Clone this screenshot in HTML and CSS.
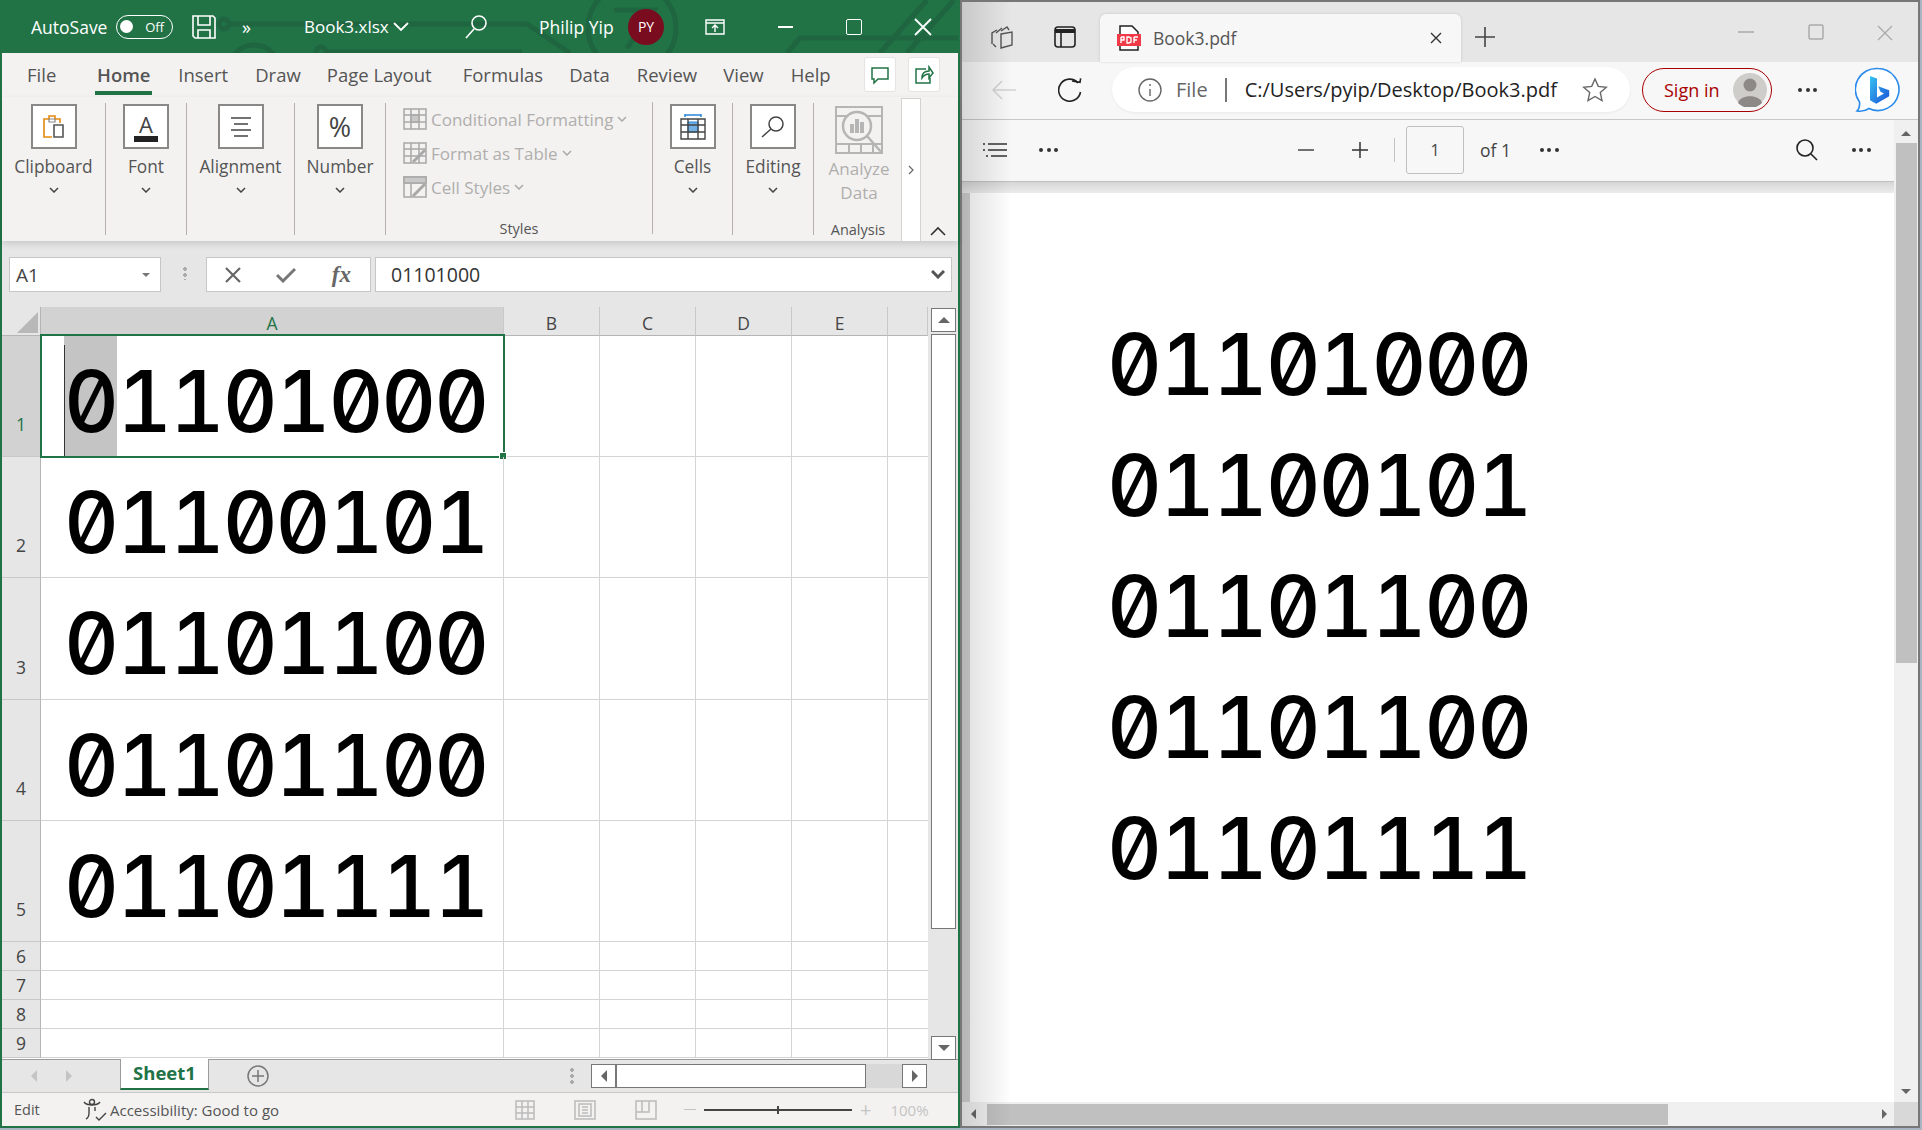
FILE: index.html
```html
<!DOCTYPE html>
<html lang="en">
<head>
    <meta charset="UTF-8">
    <title>Book3</title>
    <link rel="stylesheet" href="styles.css">
</head>
<body>
    <div class="excel">
        <div class="titlebar">
            <svg class="title-art" width="956" height="53" viewBox="0 0 956 53" fill="none" stroke="#1e6540" stroke-width="5">
                <circle cx="222" cy="24" r="5"/>
                <path d="M227 24H525L568 53"/>
                <circle cx="252" cy="70" r="25"/>
                <circle cx="319" cy="52" r="5"/>
                <path d="M324 52H520"/>
                <circle cx="630" cy="28" r="44"/>
                <path d="M612 10h40L625 48M785 53l13-15h160M878 53L925 0M905 53L952 0"/>
            </svg>
            <span class="autosave">AutoSave</span>
            <span class="toggle"><i></i>Off</span>
            <svg class="ic-save" width="26" height="26" viewBox="0 0 26 26" fill="none" stroke="#fff" stroke-width="1.6"><path d="M2 2h20l2 2v20H4l-2-2zM7 2v9h12V2M7 24v-8h12v8"/></svg>
            <span class="more">»</span>
            <span class="filename">Book3.xlsx</span>
            <svg class="ic-down" width="16" height="10" viewBox="0 0 16 10" fill="none" stroke="#fff" stroke-width="1.8"><path d="M1 1l7 7 7-7"/></svg>
            <svg class="ic-search" width="24" height="26" viewBox="0 0 24 26" fill="none" stroke="#fff" stroke-width="1.6"><circle cx="15" cy="9" r="7"/><path d="M10 15L2 24"/></svg>
            <span class="username">Philip Yip</span>
            <span class="avatar">PY</span>
            <svg class="ic-display" width="20" height="16" viewBox="0 0 20 16" fill="none" stroke="#fff" stroke-width="1.4"><path d="M1 1h18v14H1zM1 4h18M10 13V6M7 9l3-3 3 3"/></svg>
            <span class="win-btn min"></span>
            <span class="win-btn max"></span>
            <svg class="ic-close" width="18" height="18" viewBox="0 0 18 18" stroke="#fff" stroke-width="1.8"><path d="M1 1l16 16M17 1L1 17"/></svg>
        </div>

        <div class="tabs">
            <span class="tab file">File</span>
            <span class="tab home">Home</span>
            <span class="tab insert">Insert</span>
            <span class="tab draw">Draw</span>
            <span class="tab layout">Page Layout</span>
            <span class="tab formulas">Formulas</span>
            <span class="tab data">Data</span>
            <span class="tab review">Review</span>
            <span class="tab view">View</span>
            <span class="tab help">Help</span>
            <span class="tab-btn">
                <svg width="20" height="20" viewBox="0 0 20 20" fill="none" stroke="#217346" stroke-width="1.5"><path d="M2 3h16v11H8l-4 4v-4H2z"/></svg>
            </span>
            <span class="tab-btn share">
                <svg width="20" height="20" viewBox="0 0 20 20" fill="none" stroke="#217346" stroke-width="1.5"><path d="M12 4H2v14h14v-5M8 13c0-5 3-7 7-7V2l4 6-4 5V9c-3 0-5 1-7 4z"/></svg>
            </span>
        </div>

        <div class="ribbon">
            <div class="group g-clip">
                <span class="icon-box">
                    <svg width="24" height="26" viewBox="0 0 24 26" fill="none"><path d="M10 23H2V5h5V2h6v3h5v4" stroke="#e8890c" stroke-width="1.6"/><path d="M12 11h9v12h-9z" stroke="#555" stroke-width="1.6" fill="#fff"/><path d="M7 5h6v3H7z" stroke="#888" stroke-width="1.2"/></svg>
                </span>
                <span class="group-name">Clipboard</span>
                <svg class="chev" width="10" height="6" viewBox="0 0 10 6" fill="none" stroke="#444" stroke-width="1.5"><path d="M1 1l4 4 4-4"/></svg>
            </div>
            <div class="group g-font">
                <span class="icon-box">
                    <span class="font-a">A</span>
                </span>
                <span class="group-name">Font</span>
                <svg class="chev" width="10" height="6" viewBox="0 0 10 6" fill="none" stroke="#444" stroke-width="1.5"><path d="M1 1l4 4 4-4"/></svg>
            </div>
            <div class="group g-align">
                <span class="icon-box">
                    <svg width="24" height="22" viewBox="0 0 24 22" stroke="#444" stroke-width="1.5"><path d="M2 2h20M5 8h14M2 14h20M5 20h14"/></svg>
                </span>
                <span class="group-name">Alignment</span>
                <svg class="chev" width="10" height="6" viewBox="0 0 10 6" fill="none" stroke="#444" stroke-width="1.5"><path d="M1 1l4 4 4-4"/></svg>
            </div>
            <div class="group g-num">
                <span class="icon-box"><span class="percent">%</span></span>
                <span class="group-name">Number</span>
                <svg class="chev" width="10" height="6" viewBox="0 0 10 6" fill="none" stroke="#444" stroke-width="1.5"><path d="M1 1l4 4 4-4"/></svg>
            </div>
            <div class="group g-styles">
                <div class="style-row">
                    <svg width="24" height="22" viewBox="0 0 24 22" fill="none" stroke="#a8a8a8" stroke-width="1.5"><path d="M1 1h22v20H1zM1 7h22M1 14h22M8 1v20M16 1v20"/><path d="M8 7h8v7H8z" fill="#c8c8c8"/></svg>
                    <span>Conditional Formatting</span>
                    <svg width="10" height="6" viewBox="0 0 10 6" fill="none" stroke="#aaa" stroke-width="1.5"><path d="M1 1l4 4 4-4"/></svg>
                </div>
                <div class="style-row">
                    <svg width="24" height="22" viewBox="0 0 24 22" fill="none" stroke="#a8a8a8" stroke-width="1.5"><path d="M1 1h22v20H1zM1 7h22M8 1v20M16 1v20M1 14h22"/><path d="M10 20l12-12" stroke-width="3"/></svg>
                    <span>Format as Table</span>
                    <svg width="10" height="6" viewBox="0 0 10 6" fill="none" stroke="#aaa" stroke-width="1.5"><path d="M1 1l4 4 4-4"/></svg>
                </div>
                <div class="style-row">
                    <svg width="24" height="22" viewBox="0 0 24 22" fill="none" stroke="#a8a8a8" stroke-width="1.5"><path d="M1 1h22v20H1zM1 7h22M8 7v14"/><path d="M1 1h22v6H1z" fill="#c8c8c8"/><path d="M10 20l12-12" stroke-width="3"/></svg>
                    <span>Cell Styles</span>
                    <svg width="10" height="6" viewBox="0 0 10 6" fill="none" stroke="#aaa" stroke-width="1.5"><path d="M1 1l4 4 4-4"/></svg>
                </div>
                <span class="group-label">Styles</span>
            </div>
            <div class="group g-cells">
                <span class="icon-box">
                    <svg width="26" height="26" viewBox="0 0 26 26" fill="none"><path d="M5 1h16M5 0v3M21 0v3" stroke="#2b88d8" stroke-width="1.5"/><path d="M8 8h10v10H8z" fill="#71afe5" stroke="#2b88d8"/><path d="M1 5h24v20H1zM1 11h24M1 18h24M8 5v20M18 5v20" stroke="#444" stroke-width="1.4"/></svg>
                </span>
                <span class="group-name">Cells</span>
                <svg class="chev" width="10" height="6" viewBox="0 0 10 6" fill="none" stroke="#444" stroke-width="1.5"><path d="M1 1l4 4 4-4"/></svg>
            </div>
            <div class="group g-edit">
                <span class="icon-box">
                    <svg width="26" height="26" viewBox="0 0 26 26" fill="none" stroke="#444" stroke-width="1.5"><circle cx="16" cy="10" r="7"/><path d="M11 15L2 23"/></svg>
                </span>
                <span class="group-name">Editing</span>
                <svg class="chev" width="10" height="6" viewBox="0 0 10 6" fill="none" stroke="#444" stroke-width="1.5"><path d="M1 1l4 4 4-4"/></svg>
            </div>
            <div class="group g-analyze">
                <svg class="analyze-ic" width="48" height="48" viewBox="0 0 48 48" fill="none" stroke="#b5b5b5" stroke-width="2"><path d="M1 1h46v46H1zM1 10h46M1 38h46M14 38v9M26 38v9M38 38v9"/><circle cx="22" cy="20" r="14" fill="#f3f2f1" stroke-width="2.5"/><path d="M32 30l15 17" stroke-width="2.5"/><path d="M15 18h4v9h-4zM20 13h4v14h-4zM25 16h4v11h-4z" fill="#b5b5b5" stroke="none"/></svg>
                <span class="analyze-name">Analyze<br>Data</span>
                <span class="group-label">Analysis</span>
            </div>
            <div class="ribbon-strip"><svg width="6" height="10" viewBox="0 0 6 10" fill="none" stroke="#666" stroke-width="1.2"><path d="M1 1l4 4-4 4"/></svg></div>
            <svg class="collapse" width="16" height="10" viewBox="0 0 16 10" fill="none" stroke="#333" stroke-width="1.6"><path d="M1 9l7-7 7 7"/></svg>
        </div>

        <div class="formula-area">
            <div class="namebox">A1<i class="caret"></i></div>
            <span class="grip"></span>
            <div class="fx-btns">
                <svg width="16" height="16" viewBox="0 0 16 16" stroke="#666" stroke-width="2.2"><path d="M1 1l14 14M15 1L1 15"/></svg>
                <svg width="20" height="16" viewBox="0 0 20 16" fill="none" stroke="#777" stroke-width="3"><path d="M1 8l6 6L19 2"/></svg>
                <span class="fx">fx</span>
            </div>
            <div class="formula-input">01101000
                <svg width="14" height="9" viewBox="0 0 14 9" fill="none" stroke="#555" stroke-width="3"><path d="M1 1l6 6 6-6"/></svg>
            </div>
        </div>

        <div class="sheet-area">
            <div class="grid">
                <div class="corner"><i></i></div>
                <div class="col-head active">A</div>
                <div class="col-head">B</div>
                <div class="col-head">C</div>
                <div class="col-head">D</div>
                <div class="col-head">E</div>
                <div class="col-head last"></div>

                <div class="row-head tall active">1</div>
                <div class="cell big"><span class="sel">0</span>1101000<i class="cursor"></i><i class="sel-box"></i></div>
                <div class="cell"></div><div class="cell"></div><div class="cell"></div><div class="cell"></div><div class="cell last"></div>

                <div class="row-head tall">2</div>
                <div class="cell big">01100101</div>
                <div class="cell"></div><div class="cell"></div><div class="cell"></div><div class="cell"></div><div class="cell last"></div>

                <div class="row-head tall">3</div>
                <div class="cell big">01101100</div>
                <div class="cell"></div><div class="cell"></div><div class="cell"></div><div class="cell"></div><div class="cell last"></div>

                <div class="row-head tall">4</div>
                <div class="cell big">01101100</div>
                <div class="cell"></div><div class="cell"></div><div class="cell"></div><div class="cell"></div><div class="cell last"></div>

                <div class="row-head tall">5</div>
                <div class="cell big">01101111</div>
                <div class="cell"></div><div class="cell"></div><div class="cell"></div><div class="cell"></div><div class="cell last"></div>

                <div class="row-head">6</div>
                <div class="cell"></div><div class="cell"></div><div class="cell"></div><div class="cell"></div><div class="cell"></div><div class="cell last"></div>
                <div class="row-head">7</div>
                <div class="cell"></div><div class="cell"></div><div class="cell"></div><div class="cell"></div><div class="cell"></div><div class="cell last"></div>
                <div class="row-head">8</div>
                <div class="cell"></div><div class="cell"></div><div class="cell"></div><div class="cell"></div><div class="cell"></div><div class="cell last"></div>
                <div class="row-head">9</div>
                <div class="cell"></div><div class="cell"></div><div class="cell"></div><div class="cell"></div><div class="cell"></div><div class="cell last"></div>
            </div>
            <div class="vscroll">
                <span class="sb-btn"><i class="tri up"></i></span>
                <span class="sb-thumb"></span>
                <span class="sb-btn"><i class="tri down"></i></span>
            </div>
        </div>

        <div class="sheetbar">
            <i class="tri left light"></i>
            <i class="tri right light"></i>
            <span class="sheet-tab">Sheet1</span>
            <svg class="add-sheet" width="22" height="22" viewBox="0 0 22 22" fill="none" stroke="#777" stroke-width="1.5"><circle cx="11" cy="11" r="10"/><path d="M11 5v12M5 11h12"/></svg>
            <span class="grip"></span>
            <div class="hscroll">
                <span class="sb-btn"><i class="tri left"></i></span>
                <span class="h-thumb"></span>
                <span class="h-rest"></span>
                <span class="sb-btn"><i class="tri right"></i></span>
            </div>
        </div>

        <div class="statusbar">
            <span class="mode">Edit</span>
            <svg class="acc" width="24" height="24" viewBox="0 0 24 24" fill="none" stroke="#444" stroke-width="1.4"><circle cx="9" cy="4" r="2.5"/><path d="M1 4c3 4 13 4 16 0M6 9v6c0 3-1 5-3 6M12 9v4M13 19l3 3 7-7"/></svg>
            <span class="acc-text">Accessibility: Good to go</span>
            <svg class="view-ic normal" width="20" height="20" viewBox="0 0 20 20" fill="none" stroke="#bbb" stroke-width="1.5"><path d="M1 1h18v18H1zM1 7h18M1 13h18M7 1v18M13 1v18"/></svg>
            <svg class="view-ic" width="22" height="20" viewBox="0 0 22 20" fill="none" stroke="#bbb" stroke-width="1.5"><path d="M1 1h20v18H1zM5 4h12v12H5zM8 7h6M8 10h6M8 13h6"/></svg>
            <svg class="view-ic" width="22" height="20" viewBox="0 0 22 20" fill="none" stroke="#bbb" stroke-width="1.5"><path d="M1 1h20v18H1zM1 12h13V1M7 1v11"/></svg>
            <span class="zoom-minus"></span>
            <span class="zoom-track"><i></i></span>
            <span class="zoom-plus">+</span>
            <span class="zoom-val">100%</span>
        </div>
    </div>

    <div class="edge">
        <div class="tabstrip">
            <svg class="ic-coll" width="26" height="26" viewBox="0 0 26 26" fill="none" stroke="#555" stroke-width="1.4"><path d="M12 7l6-4 2 3M7 9l6-5M3 20V9l5-3M7 23l-3-3M12 10l11-2v13l-11 3z"/></svg>
            <svg class="ic-vtabs" width="22" height="22" viewBox="0 0 22 22" fill="none" stroke="#222" stroke-width="1.6"><rect x="1" y="1" width="20" height="20" rx="3"/><path d="M1 5h20" stroke-width="4"/><path d="M7 6v15"/></svg>
            <div class="edge-tab">
                <svg width="24" height="26" viewBox="0 0 24 26"><path d="M3 1h12l6 6v18H3z" fill="#fff" stroke="#222" stroke-width="1.5"/><rect x="0" y="9" width="24" height="12" fill="#f03a47"/><path d="M4 12v6M4 12h3v3H4M10 12v6h2l2-1v-4l-2-1zM17 12v6M17 12h4M17 15h3" fill="none" stroke="#fff" stroke-width="1.4"/></svg>
                <span class="tab-title">Book3.pdf</span>
                <svg class="tab-x" width="12" height="12" viewBox="0 0 12 12" stroke="#333" stroke-width="1.4"><path d="M1 1l10 10M11 1L1 11"/></svg>
            </div>
            <svg class="ic-plus" width="22" height="22" viewBox="0 0 22 22" stroke="#444" stroke-width="1.6"><path d="M11 1v20M1 11h20"/></svg>
            <svg class="e-win min" width="16" height="2" viewBox="0 0 16 2" stroke="#aaa" stroke-width="1.5"><path d="M0 1h16"/></svg>
            <svg class="e-win max" width="16" height="16" viewBox="0 0 16 16" fill="none" stroke="#aaa" stroke-width="1.5"><rect x="1" y="1" width="14" height="14" rx="1.5"/></svg>
            <svg class="e-win close" width="16" height="16" viewBox="0 0 16 16" stroke="#aaa" stroke-width="1.3"><path d="M1 1l14 14M15 1L1 15"/></svg>
        </div>

        <div class="toolbar">
            <svg class="ic-back" width="24" height="20" viewBox="0 0 24 20" fill="none" stroke="#d2d2d2" stroke-width="1.5"><path d="M24 10H1M10 1l-9 9 9 9"/></svg>
            <svg class="ic-reload" width="24" height="24" viewBox="0 0 24 24" fill="none" stroke="#222" stroke-width="1.6"><path d="M20 5a11 11 0 1 0 2.5 9"/><path d="M14 4h8V0" transform="rotate(10 20 4)"/></svg>
            <div class="urlbar">
                <svg width="24" height="24" viewBox="0 0 24 24" fill="none" stroke="#666" stroke-width="1.4"><circle cx="12" cy="12" r="11"/><path d="M12 11v7M12 6v2"/></svg>
                <span class="url-file">File</span>
                <span class="url-sep"></span>
                <span class="url">C:/Users/pyip/Desktop/Book3.pdf</span>
                <svg class="star" width="26" height="26" viewBox="0 0 26 26" fill="none" stroke="#666" stroke-width="1.4"><path d="M13 2l3.300 7.400 8 .8-6 5.400 1.700 8L13 19.500 6 23.600l1.700-8-6-5.400 8-.8z"/></svg>
            </div>
            <div class="signin">
                <span>Sign in</span>
                <svg width="34" height="34" viewBox="0 0 34 34"><circle cx="17" cy="17" r="17" fill="#cfcdc9"/><circle cx="17" cy="12" r="6.500" fill="#8d8986"/><path d="M5 30c2-9 22-9 24 0a17 17 0 0 1-24 0z" fill="#8d8986"/></svg>
            </div>
            <span class="dots tb-dots"><i></i><i></i><i></i></span>
            <svg class="bing" width="46" height="46" viewBox="0 0 46 46" fill="none">
                <defs>
                    <linearGradient id="bing-b" x1="0" y1="0" x2="1" y2="1"><stop offset="0" stop-color="#36c3f0"/><stop offset="1" stop-color="#1b4fd8"/></linearGradient>
                </defs>
                <path d="M23 1.500a21 21 0 1 1-9 40c-3 2-8 3-12 2.500 2-2 3-5 2.500-9A21 21 0 0 1 23 1.500z" fill="#fff" stroke="#2a8bea" stroke-width="1.600"/>
                <path d="M15 9l7 2.500v19l7-4-3.500-1.700-2.300-5.500 11 4v6l-13 7.500-6.200-3.500z" fill="url(#bing-b)"/>
            </svg>
        </div>

        <div class="edge-body">
            <div class="edge-left">
                <div class="pdfbar">
                    <svg class="ic-list" width="24" height="16" viewBox="0 0 24 16" fill="none" stroke="#333" stroke-width="1.500"><path d="M5 2h19M5 8h19M8 14h16M0 2h2M0 8h2M3 14h2"/></svg>
                    <span class="dots pdf-dots"><i></i><i></i><i></i></span>
                    <svg class="ic-minus" width="16" height="2" viewBox="0 0 16 2" stroke="#444" stroke-width="1.500"><path d="M0 1h16"/></svg>
                    <svg class="ic-zplus" width="18" height="18" viewBox="0 0 18 18" stroke="#333" stroke-width="1.500"><path d="M9 1v16M1 9h16"/></svg>
                    <span class="pdf-sep"></span>
                    <span class="page-box">1</span>
                    <span class="of">of 1</span>
                    <span class="dots of-dots"><i></i><i></i><i></i></span>
                    <svg class="ic-find" width="22" height="22" viewBox="0 0 22 22" fill="none" stroke="#222" stroke-width="1.600"><circle cx="9" cy="9" r="8"/><path d="M15 15l6 6"/></svg>
                    <span class="dots find-dots"><i></i><i></i><i></i></span>
                </div>
                <div class="pdf-main">
                    <div class="pdf-page">
                        <div class="pdf-line">01101000</div>
                        <div class="pdf-line">01100101</div>
                        <div class="pdf-line">01101100</div>
                        <div class="pdf-line">01101100</div>
                        <div class="pdf-line">01101111</div>
                    </div>
                    <div class="pdf-hscroll">
                        <i class="tri left small"></i>
                        <span class="pdf-hthumb"></span>
                        <i class="tri right small"></i>
                    </div>
                </div>
            </div>
            <div class="pdf-vscroll">
                <i class="tri up small"></i>
                <span class="pdf-vthumb"></span>
                <i class="tri down small"></i>
                <span class="pdf-corner"></span>
            </div>
        </div>
    </div>
</body>
</html>
```

FILE: styles.css
```css
* {
    box-sizing: border-box;
}

html, body {
    margin: 0;
    height: 100%;
    overflow: hidden;
}

body {
    display: flex;
    align-items: flex-start;
    width: 1922px;
    height: 1130px;
    font-family: "Open Sans", "Noto Sans", sans-serif;
    color: #444;
    background: #a9b4c0;
}

i {
    display: block;
}

/* excel window */

.excel {
    width: 960px;
    height: 1128px;
    flex: none;
    display: flex;
    flex-direction: column;
    border-left: 2px solid #217346;
    border-right: 2px solid #217346;
    border-bottom: 2px solid #217346;
    background: #f3f2f1;
}

.titlebar {
    height: 53px;
    flex: none;
    position: relative;
    display: flex;
    align-items: center;
    background: #217346;
    color: #fff;
    font-size: 17.5px;
    overflow: hidden;
}

.title-art {
    position: absolute;
    left: 0;
    top: 0;
}

.titlebar > *:not(.title-art) {
    position: relative;
}

.autosave {
    margin-left: 29px;
    width: 85px;
    white-space: nowrap;
}

.toggle {
    width: 57px;
    height: 24px;
    border: 1.5px solid #fff;
    border-radius: 12px;
    display: flex;
    align-items: center;
    justify-content: flex-end;
    padding-right: 8px;
    font-size: 13px;
}

.toggle i {
    width: 13px;
    height: 13px;
    border-radius: 50%;
    background: #fff;
    margin-right: 12px;
}

.ic-save {
    margin-left: 18px;
}

.more {
    margin-left: 25px;
    font-size: 18px;
    width: 62px;
}

.filename {
    width: 89px;
    white-space: nowrap;
    font-size: 17px;
}

.ic-search {
    margin-left: 55px;
}

.username {
    margin-left: 51px;
    width: 89px;
    white-space: nowrap;
}

.avatar {
    width: 36px;
    height: 36px;
    border-radius: 50%;
    background: #7a0c1f;
    display: flex;
    align-items: center;
    justify-content: center;
    font-size: 14px;
}

.ic-display {
    margin-left: 41px;
}

.win-btn.min {
    width: 15px;
    height: 2px;
    margin-left: 53px;
    background: #fff;
}

.win-btn.max {
    width: 16px;
    height: 16px;
    margin-left: 53px;
    border: 1.8px solid #fff;
    border-radius: 2px;
}

.ic-close {
    margin-left: 52px;
}

.tabs {
    height: 44px;
    flex: none;
    display: flex;
    align-items: center;
    font-size: 18.5px;
    color: #555;
    position: relative;
}

.tab {
    height: 100%;
    padding-top: 9px;
    white-space: nowrap;
}

.file { margin-left: 25px; }
.home {
    margin-left: 39px;
    width: 57px;
    font-weight: 600;
    border-bottom: 4px solid #217346;
    text-align: center;
    height: 42px;
    align-self: flex-start;
}
.insert { margin-left: 26px; }
.draw { margin-left: 27px; }
.layout { margin-left: 26px; }
.formulas { margin-left: 31px; }
.data { margin-left: 26px; }
.review { margin-left: 27px; }
.view { margin-left: 26px; }
.help { margin-left: 27px; }

.tab-btn {
    position: absolute;
    left: 862px;
    top: 4px;
    width: 32px;
    height: 35px;
    background: #fff;
    border: 1px solid #e6e4e2;
    border-radius: 3px;
    display: flex;
    align-items: center;
    justify-content: center;
}

.tab-btn.share {
    left: 906px;
}

.ribbon {
    height: 144px;
    flex: none;
    display: flex;
    position: relative;
    padding-top: 6px;
    box-shadow: 0 3px 6px rgba(0, 0, 0, 0.12);
    z-index: 2;
}

.group {
    height: 132px;
    display: flex;
    flex-direction: column;
    align-items: center;
    border-right: 1.5px solid #b3b0ad;
    position: relative;
}

.g-clip { width: 104px; }
.g-font { width: 81px; }
.g-align { width: 108px; }
.g-num { width: 91px; }
.g-styles { width: 267px; align-items: flex-start; padding: 0 0 0 17px; margin-top: -1px; }
.g-cells { width: 80px; }
.g-edit { width: 81px; }
.g-analyze { width: 88px; border-right: none; padding-left: 2px; }

.icon-box {
    width: 46px;
    height: 45px;
    margin-top: 1px;
    flex: none;
    border: 2px solid #8a8886;
    background: #fff;
    display: flex;
    align-items: center;
    justify-content: center;
}

.group-name {
    margin-top: 7px;
    font-size: 17.3px;
    line-height: 22px;
    color: #555;
}

.chev {
    margin-top: 9px;
}

.font-a {
    font-size: 22px;
    line-height: 22px;
    color: #444;
    border-bottom: 6px solid #222;
    width: 24px;
    text-align: center;
    height: 29px;
    margin-top: 2px;
}

.percent {
    font-size: 27px;
    color: #444;
}

.style-row {
    height: 34px;
    display: flex;
    align-items: center;
    gap: 4px;
    font-size: 17px;
    color: #b0aeac;
    white-space: nowrap;
}

.group-label {
    position: absolute;
    bottom: -5px;
    left: 0;
    right: 0;
    text-align: center;
    font-size: 14.5px;
    line-height: 20px;
    color: #555;
}

.analyze-ic {
    margin-top: 3px;
    flex: none;
}

.analyze-name {
    margin-top: 3px;
    text-align: center;
    font-size: 17px;
    line-height: 24px;
    color: #b0aeac;
}

.ribbon-strip {
    position: absolute;
    left: 899px;
    top: 1px;
    width: 20px;
    height: 143px;
    background: #fff;
    border: 1px solid #d5d3d1;
    border-bottom: none;
    display: flex;
    align-items: center;
    justify-content: center;
}

.collapse {
    position: absolute;
    left: 928px;
    top: 129px;
}

.formula-area {
    height: 66px;
    flex: none;
    display: flex;
    align-items: flex-start;
    padding: 16px 0 0 7px;
    background: #e6e6e6;
}

.namebox {
    width: 152px;
    height: 35px;
    background: #fff;
    border: 1px solid #c6c6c6;
    display: flex;
    align-items: center;
    justify-content: space-between;
    padding: 0 10px 0 6px;
    font-size: 19px;
    color: #444;
}

.caret {
    width: 0;
    height: 0;
    border: 4px solid transparent;
    border-top: 4px solid #777;
    margin-top: 4px;
}

.formula-area .grip {
    width: 4px;
    height: 14px;
    margin: 9px 19px 0 22px;
}

.grip {
    background: radial-gradient(circle, #aaa 2px, transparent 2px) 0 0 / 4px 6px;
    flex: none;
}

.fx-btns {
    width: 165px;
    height: 35px;
    background: #fff;
    border: 1px solid #c6c6c6;
    display: flex;
    align-items: center;
    justify-content: space-between;
    padding: 0 19px 0 18px;
}

.fx {
    font-family: "Liberation Serif", serif;
    font-style: italic;
    font-weight: 700;
    font-size: 23px;
    color: #666;
}

.formula-input {
    width: 577px;
    height: 35px;
    margin-left: 4px;
    background: #fff;
    border: 1px solid #c6c6c6;
    display: flex;
    align-items: center;
    justify-content: space-between;
    padding: 0 6px 0 15px;
    font-size: 19.5px;
    color: #333;
}

.sheet-area {
    flex: 1;
    min-height: 0;
    display: flex;
    background: #e6e6e6;
    position: relative;
}

.grid {
    width: 926px;
    height: 752px;
    display: grid;
    grid-template-columns: 39px 463px 96px 96px 96px 96px 40px;
    grid-template-rows: 29px 121px 121px 122px 121px 121px 29px 29px 29px 29px;
    background: #fff;
}

.corner {
    background: #e6e6e6;
    border-right: 1px solid #b5b5b5;
    border-bottom: 1px solid #b5b5b5;
    padding: 5px 2px 2px 0;
}

.corner i {
    height: 100%;
    background: #b8b8b8;
    clip-path: polygon(100% 0, 100% 100%, 0 100%);
    width: 21px;
    margin-left: auto;
}

.col-head {
    background: #e6e6e6;
    border-right: 1px solid #c8c8c8;
    border-bottom: 1px solid #b5b5b5;
    display: flex;
    align-items: flex-end;
    justify-content: center;
    font-size: 17.5px;
    line-height: 23px;
    color: #444;
}

.col-head.active {
    background: #d2d2d2;
    color: #217346;
    border-bottom: 1px solid #217346;
}

.row-head {
    background: #e6e6e6;
    border-right: 1px solid #b5b5b5;
    border-bottom: 1px solid #c8c8c8;
    display: flex;
    align-items: flex-end;
    justify-content: center;
    font-size: 17.5px;
    line-height: 24px;
    padding-bottom: 2px;
    color: #444;
}

.row-head.tall {
    padding-bottom: 20px;
}

.row-head.active {
    background: #d2d2d2;
    color: #217346;
}

.cell {
    border-right: 1px solid #d4d4d4;
    border-bottom: 1px solid #d4d4d4;
    min-width: 0;
}

.cell.last {
    border-right: none;
}

/* Inter with tabular figures and the slashed zero feature */
.big,
.pdf-line {
    font-family: "Inter", sans-serif;
    font-feature-settings: "zero", "tnum";
    font-size: 85px;
    font-weight: 500;
    letter-spacing: -2.2px;
    color: #000;
    white-space: nowrap;
}

.big {
    line-height: 132px;
    padding-left: 23px;
    position: relative;
    display: flex;
    align-items: flex-start;
}

.sel {
    background: #c4c4c4;
    height: 120px;
    display: block;
    flex: none;
}

.cursor {
    position: absolute;
    left: 23px;
    top: 9px;
    bottom: 0;
    width: 1px;
    background: #333;
}

.sel-box {
    position: absolute;
    left: -1px;
    top: -2px;
    right: -2px;
    bottom: -2px;
    border: 2px solid #217346;
    pointer-events: none;
}

.sel-box::after {
    content: "";
    position: absolute;
    right: -4px;
    bottom: -4px;
    width: 6px;
    height: 6px;
    background: #217346;
    border: 1px solid #fff;
}

.vscroll {
    width: 25px;
    margin-left: 3px;
    height: 752px;
    display: flex;
    flex-direction: column;
    padding-top: 1px;
}

.sb-btn {
    width: 25px;
    height: 24px;
    flex: none;
    background: #fff;
    border: 1px solid #777;
    display: flex;
    align-items: center;
    justify-content: center;
}

.sb-thumb {
    flex: none;
    height: 595px;
    margin: 2px 0 107px;
    background: #fff;
    border: 1px solid #777;
}

.tri {
    width: 0;
    height: 0;
    border: 6px solid transparent;
    flex: none;
}

.tri.up { border-top: none; border-bottom: 6px solid #666; }
.tri.down { border-bottom: none; border-top: 6px solid #666; }
.tri.left { border-left: none; border-right: 6px solid #666; }
.tri.right { border-right: none; border-left: 6px solid #666; }
.tri.light.left { border-right-color: #c4c4c4; }
.tri.light.right { border-left-color: #c4c4c4; }

.sheetbar {
    height: 34px;
    flex: none;
    display: flex;
    align-items: center;
    background: #e6e6e6;
    border-top: 1px solid #9b9b9b;
    border-bottom: 1px solid #c8c8c8;
}

.sheetbar > .tri.left {
    margin-left: 29px;
}

.sheetbar > .tri.right {
    margin-left: 29px;
}

.sheet-tab {
    width: 89px;
    height: 31px;
    margin-left: 48px;
    align-self: flex-start;
    margin-top: -1px;
    background: #fff;
    border: 1px solid #9b9b9b;
    border-top: none;
    border-bottom: 2px solid #217346;
    color: #217346;
    font-weight: 700;
    font-size: 18.5px;
    line-height: 28px;
    text-align: center;
}

.add-sheet {
    margin-left: 38px;
}

.sheetbar .grip {
    width: 4px;
    height: 18px;
    margin-left: 301px;
}

.hscroll {
    display: flex;
    align-items: center;
    margin-left: 17px;
}

.h-thumb {
    width: 251px;
    height: 24px;
    background: #fff;
    border: 1px solid #777;
    border-left-width: 2px;
    margin-left: -1px;
}

.h-rest {
    width: 36px;
    height: 24px;
    background: #d8d8d8;
}

.statusbar {
    height: 33px;
    flex: none;
    display: flex;
    align-items: center;
    font-size: 14.5px;
    color: #555;
    background: #f3f2f1;
}

.mode {
    margin-left: 12px;
    width: 69px;
}

.acc {
    margin-right: 3px;
    flex: none;
}

.acc-text {
    width: 405px;
    white-space: nowrap;
    font-size: 15px;
}

.view-ic {
    margin-left: 39px;
    flex: none;
}

.view-ic.normal {
    margin-left: 0;
}

.zoom-minus {
    width: 12px;
    height: 1.5px;
    background: #c4c4c4;
    margin-left: 27px;
}

.zoom-track {
    width: 148px;
    height: 2px;
    background: #444;
    margin-left: 8px;
    position: relative;
}

.zoom-track i {
    position: absolute;
    left: 73px;
    top: -3px;
    width: 2px;
    height: 8px;
    background: #444;
}

.zoom-plus {
    margin-left: 8px;
    font-size: 20px;
    line-height: 20px;
    color: #c4c4c4;
}

.zoom-val {
    margin-left: 19px;
    color: #c4c4c4;
    font-size: 15px;
}

/* edge window */

.edge {
    width: 960px;
    height: 1128px;
    flex: none;
    display: flex;
    flex-direction: column;
    position: relative;
    border: 2px solid #777;
    background: #f7f7f7;
    font-size: 17px;
}

/* shadow the excel window throws over this one */
.edge::after {
    content: "";
    position: absolute;
    left: 0;
    top: 0;
    bottom: 0;
    width: 50px;
    background: linear-gradient(90deg, rgba(0, 0, 0, 0.13), rgba(0, 0, 0, 0));
    pointer-events: none;
}

.tabstrip {
    height: 60px;
    flex: none;
    display: flex;
    align-items: flex-end;
    background: #e6e6e6;
    position: relative;
}

.ic-coll {
    margin: 0 0 12px 27px;
}

.ic-vtabs {
    margin: 0 0 14px 39px;
}

.edge-tab {
    width: 361px;
    height: 48px;
    margin-left: 24px;
    background: #f7f7f7;
    border-radius: 6px 6px 0 0;
    display: flex;
    align-items: center;
    padding: 0 19px 0 17px;
    color: #555;
    font-size: 17.5px;
    box-shadow: 0 0 3px rgba(0, 0, 0, 0.15);
}

.tab-title {
    margin-left: 12px;
    flex: 1;
}

.ic-plus {
    margin: 0 0 14px 13px;
}

.e-win {
    position: absolute;
}

.e-win.min { left: 776px; top: 29px; }
.e-win.max { left: 846px; top: 22px; }
.e-win.close { left: 915px; top: 23px; }

.toolbar {
    height: 58px;
    flex: none;
    display: flex;
    align-items: center;
    padding-bottom: 2px;
    background: #f7f7f7;
    border-bottom: 1.5px solid #c8c8c8;
}

.ic-back {
    margin-left: 30px;
}

.ic-reload {
    margin-left: 42px;
}

.urlbar {
    width: 518px;
    height: 45px;
    margin-left: 30px;
    border-radius: 23px;
    background: #fff;
    display: flex;
    align-items: center;
    padding-left: 26px;
    box-shadow: 0 1px 3px rgba(0, 0, 0, 0.06);
    color: #222;
    font-size: 20px;
    white-space: nowrap;
}

.url-file {
    margin-left: 14px;
    color: #666;
}

.url-sep {
    width: 2px;
    height: 24px;
    background: #777;
    margin: 0 18px 0 17px;
}

.star {
    margin-left: auto;
    margin-right: 22px;
    flex: none;
}

.signin {
    width: 130px;
    height: 44px;
    margin-left: 12px;
    border: 1.5px solid #a80000;
    border-radius: 22px;
    display: flex;
    align-items: center;
    justify-content: space-between;
    padding: 0 4px 0 21px;
    color: #a80000;
    font-size: 18px;
}

.dots {
    display: flex;
    gap: 3.5px;
    flex: none;
}

.dots i {
    width: 4px;
    height: 4px;
    border-radius: 50%;
    background: #333;
}

.tb-dots {
    margin-left: 26px;
}

.bing {
    margin-left: 38px;
}

.edge-body {
    flex: 1;
    min-height: 0;
    display: flex;
}

.edge-left {
    flex: 1;
    min-width: 0;
    display: flex;
    flex-direction: column;
}

.pdfbar {
    height: 62px;
    flex: none;
    display: flex;
    align-items: center;
    padding-bottom: 2px;
    background: #f7f7f7;
    border-bottom: 1.5px solid #c0c0c0;
}

.ic-list {
    margin-left: 21px;
}

.pdf-dots {
    margin-left: 32px;
}

.ic-minus {
    margin-left: 240px;
}

.ic-zplus {
    margin-left: 37px;
}

.pdf-sep {
    width: 1px;
    height: 24px;
    background: #c4c4c4;
    margin-left: 25px;
}

.page-box {
    width: 58px;
    height: 48px;
    margin-left: 11px;
    border: 1px solid #c0c0c0;
    border-radius: 3px;
    display: flex;
    align-items: center;
    justify-content: center;
    font-size: 16px;
    color: #444;
}

.of {
    margin-left: 16px;
    font-size: 17.5px;
    color: #444;
}

.of-dots {
    margin-left: 29px;
}

.ic-find {
    margin-left: 237px;
}

.find-dots {
    margin-left: 34px;
}

.pdf-main {
    flex: 1;
    min-height: 0;
    display: flex;
    flex-direction: column;
    padding-top: 11px;
    background: linear-gradient(#d6d6d6, #ececec 11px, #d0d0d0 11px);
}

.pdf-page {
    flex: 1;
    min-height: 0;
    margin-left: 8px;
    padding: 111px 0 0 137px;
    background: #fff;
}

.pdf-line {
    line-height: 121px;
}

.pdf-hscroll {
    height: 24px;
    flex: none;
    display: flex;
    align-items: center;
    background: #f0f0f0;
    padding: 0 7px 0 9px;
}

.pdf-hthumb {
    width: 681px;
    height: 21px;
    margin-left: 11px;
    margin-right: auto;
    background: #c0c0c0;
}

.tri.small {
    border-width: 5px;
}

.tri.small.left { border-left: none; }
.tri.small.right { border-right: none; }
.tri.small.up { border-top: none; }
.tri.small.down { border-bottom: none; }

.pdf-vscroll {
    width: 24px;
    flex: none;
    display: flex;
    flex-direction: column;
    align-items: center;
    padding-top: 11px;
    background: #f0f0f0;
}

.pdf-vthumb {
    width: 21px;
    height: 520px;
    margin: 7px 0 auto;
    background: #c0c0c0;
}

.pdf-corner {
    width: 24px;
    height: 24px;
    flex: none;
    margin-top: 8px;
    background: #d8d8d8;
}
```
